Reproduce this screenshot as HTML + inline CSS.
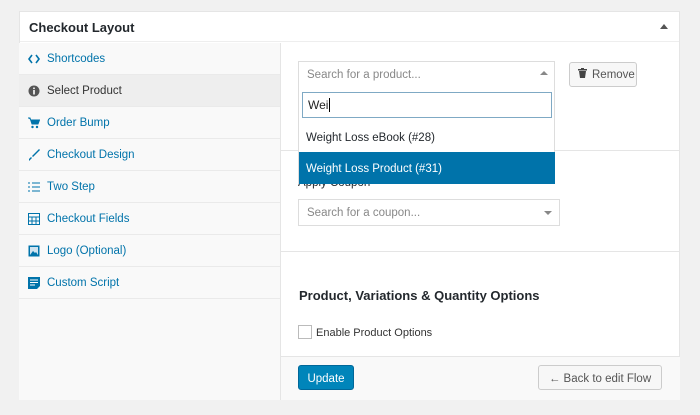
<!DOCTYPE html>
<html><head><style>
*{box-sizing:border-box;margin:0;padding:0}
body{width:700px;height:415px;background:#f1f1f1;font-family:"Liberation Sans",sans-serif;font-size:12px;color:#23282d;position:relative;overflow:hidden}
.a{position:absolute}
.panel{left:19px;top:11px;width:661px;height:389px;background:#fff;border:1px solid #e5e5e5}
.side{left:19px;top:43px;width:262px;height:357px;background:#f9f9f9;border-right:1px solid #e5e5e5}
.it{position:absolute;left:0;width:261px;height:32px;border-bottom:1px solid #eaeaea;color:#0073aa;line-height:33px;padding-left:28px;font-size:11.5px}
.it svg{position:absolute;left:9px;top:10px}
.sel{background:#eee;color:#333}
.box{border:1px solid #ddd;background:#fff;color:#888;font-size:11.5px;padding-left:8px}
.btn{border:1px solid #ccc;background:#f7f7f7;border-radius:3px;color:#555;font-size:11.5px}
</style></head><body>
<div class="a panel"></div>
<div class="a" style="left:20px;top:12px;width:659px;height:30px;border-bottom:1px solid #eee"></div>
<div class="a" style="left:29px;top:20px;font-size:13px;font-weight:bold;color:#23282d">Checkout Layout</div>
<div class="a" style="left:660px;top:24px;width:0;height:0;border-left:4px solid transparent;border-right:4px solid transparent;border-bottom:5px solid #555"></div>
<div class="a side">
<div class="it" style="top:0"><svg width="12" height="12" viewBox="0 0 12 12"><path d="M4 2L1 6l3 4M8 2l3 4-3 4" stroke="#0073aa" stroke-width="1.6" fill="none"/></svg>Shortcodes</div>
<div class="it sel" style="top:32px"><svg width="12" height="12"><circle cx="6" cy="6" r="5.5" fill="#555"/><rect x="5.2" y="5" width="1.6" height="4.5" fill="#fff"/><circle cx="6" cy="3.3" r="0.9" fill="#fff"/></svg>Select Product</div>
<div class="it" style="top:64px"><svg width="12" height="12"><path d="M0 1h2l2 6h6l1.5-4H3" fill="#0073aa" stroke="#0073aa"/><circle cx="4.5" cy="10" r="1.2" fill="#0073aa"/><circle cx="9" cy="10" r="1.2" fill="#0073aa"/></svg>Order Bump</div>
<div class="it" style="top:96px"><svg width="12" height="12"><path d="M11 0L4 7l1 1 7-7zM3 8l1 1-3 3 0-2z" fill="#0073aa"/></svg>Checkout Design</div>
<div class="it" style="top:128px"><svg width="12" height="12"><path d="M4 2h8M4 6h8M4 10h8M1 1v2M1 5v2M1 9v2" stroke="#0073aa"/></svg>Two Step</div>
<div class="it" style="top:160px"><svg width="12" height="12"><rect x="0.5" y="0.5" width="11" height="11" fill="none" stroke="#0073aa"/><path d="M0 4h12M0 8h12M4 4v8M8 4v8" stroke="#0073aa"/></svg>Checkout Fields</div>
<div class="it" style="top:192px"><svg width="12" height="12"><rect x="0.5" y="0.5" width="11" height="11" fill="#0073aa"/><rect x="2" y="2" width="8" height="8" fill="#cfe3ef"/><path d="M2 10l3-4 2 2 1-1 2 3z" fill="#0073aa"/></svg>Logo (Optional)</div>
<div class="it" style="top:224px"><svg width="12" height="12"><path d="M0 0h12v9l-3 3H0z" fill="#0073aa"/><path d="M2 3h8M2 5.5h8M2 8h5" stroke="#fff"/></svg>Custom Script</div>
</div>
<div class="a" style="left:281px;top:150px;width:399px;border-top:1px solid #e5e5e5"></div>
<div class="a" style="left:281px;top:251px;width:399px;border-top:1px solid #e5e5e5"></div>
<div class="a" style="left:298px;top:177px;font-size:11.5px;color:#23282d">Apply Coupon</div>
<div class="a box" style="left:298px;top:199px;width:262px;height:27px;line-height:27px">Search for a coupon...</div>
<div class="a" style="left:544px;top:211px;border-left:4px solid transparent;border-right:4px solid transparent;border-top:4px solid #888"></div>
<div class="a" style="left:299px;top:288px;font-size:13px;font-weight:bold">Product, Variations &amp; Quantity Options</div>
<div class="a" style="left:298px;top:325px;width:14px;height:14px;border:1px solid #bbb;background:#fff"></div>
<div class="a" style="left:316px;top:327px;font-size:11px;color:#333">Enable Product Options</div>
<div class="a" style="left:281px;top:356px;width:399px;height:44px;background:#f9f9f9;border-top:1px solid #e5e5e5"></div>
<div class="a" style="left:298px;top:365px;width:56px;height:25px;background:#0085ba;border:1px solid #006799;border-radius:3px;color:#fff;text-align:center;line-height:26px;font-size:11.5px">Update</div>
<div class="a btn" style="left:538px;top:365px;width:124px;height:25px;line-height:26px;text-align:center">&#8592; Back to edit Flow</div>
<div class="a box" style="left:298px;top:61px;width:257px;height:27px;line-height:27px">Search for a product...</div>
<div class="a" style="left:540px;top:71px;border-left:4px solid transparent;border-right:4px solid transparent;border-bottom:4px solid #888"></div>
<div class="a btn" style="left:569px;top:62px;width:68px;height:25px;line-height:25px;padding-left:22px">Remove</div>
<svg class="a" style="left:578px;top:68px" width="9" height="10"><rect x="0" y="1" width="9" height="1.5" fill="#444"/><rect x="3" y="0" width="3" height="1.5" fill="#444"/><path d="M1 3h7l-1 7H2z" fill="#444"/></svg>
<div class="a" style="left:298px;top:87px;width:257px;height:97px;background:#fff;border:1px solid #ddd;border-top:none"></div>
<div class="a" style="left:302px;top:92px;width:250px;height:26px;border:1px solid #7fa9c4;background:#fff;font-size:12px;line-height:25px;padding-left:5px;color:#222">Wei<span style="border-left:1px solid #000;margin-left:1px"></span></div>
<div class="a" style="left:306px;top:132px;font-size:11.5px">Weight Loss eBook (#28)</div>
<div class="a" style="left:299px;top:152px;width:256px;height:32px;background:#0073aa;color:#fff;font-size:11.5px;line-height:34px;padding-left:7px">Weight Loss Product (#31)</div>
</body></html>
